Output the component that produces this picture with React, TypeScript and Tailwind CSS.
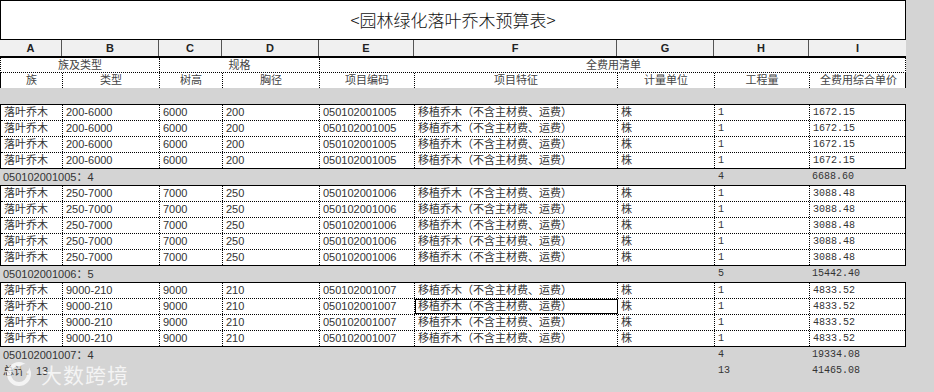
const grid = "grid grid-cols-[62px_97px_63px_97px_95px_203px_97px_95px_97px]";
const sans = "font-['Liberation_Sans','Noto_Sans_CJK_SC',sans-serif]";
const mono = "font-['Liberation_Mono','Noto_Sans_CJK_SC',monospace]";

type Block = {
  type: string;
  height: string;
  dbh: string;
  code: string;
  price: string;
  count: number;
  total: string;
};

const blocks: Block[] = [
  { type: "200-6000", height: "6000", dbh: "200", code: "050102001005", price: "1672.15", count: 4, total: "6688.60" },
  { type: "250-7000", height: "7000", dbh: "250", code: "050102001006", price: "3088.48", count: 5, total: "15442.40" },
  { type: "9000-210", height: "9000", dbh: "210", code: "050102001007", price: "4833.52", count: 4, total: "19334.08" },
];

const letters = ["A", "B", "C", "D", "E", "F", "G", "H", "I"];
const subHeads = ["族", "类型", "树高", "胸径", "项目编码", "项目特征", "计量单位", "工程量", "全费用综合单价"];

const Cell = ({
  children,
  last,
  numeric,
  selected,
}: {
  children: React.ReactNode;
  last?: boolean;
  numeric?: boolean;
  selected?: boolean;
}) => (
  <div
    className={`h-full pl-[3px] leading-[15px] whitespace-nowrap overflow-hidden ${
      last ? "" : "border-r border-dotted border-black"
    } ${numeric ? `${mono} text-[10px]` : "text-[11px]"} ${
      selected ? "outline outline-1 outline-black -outline-offset-1" : ""
    }`}
  >
    {children}
  </div>
);

const DataBlock = ({ block, blockIndex }: { block: Block; blockIndex: number }) => (
  <div className="border-x border-t border-black bg-white">
    {Array.from({ length: block.count }).map((_, i) => {
      const lastRow = i === block.count - 1;
      const values = ["落叶乔木", block.type, block.height, block.dbh, block.code, "移植乔木（不含主材费、运费）", "株", "1", block.price];
      return (
        <div
          key={i}
          className={`${grid} h-[16px] text-[#333] ${
            lastRow ? "border-b border-black" : "border-b border-dotted border-black"
          }`}
        >
          {values.map((v, c) => (
            <Cell key={c} last={c === 8} numeric={c >= 7} selected={blockIndex === 2 && i === 1 && c === 5}>
              {v}
            </Cell>
          ))}
        </div>
      );
    })}
  </div>
);

const SummaryRow = ({ label, qty, amount }: { label: string; qty: string; amount: string }) => (
  <div className={`${grid} h-[16px] text-[#333]`}>
    <div className="col-span-7 pl-[3px] text-[11px] leading-[16px] whitespace-nowrap">{label}</div>
    <div className={`pl-[4px] ${mono} text-[10px] leading-[16px]`}>{qty}</div>
    <div className={`pl-[3px] ${mono} text-[10px] leading-[16px]`}>{amount}</div>
  </div>
);

export default function App() {
  return (
    <div className={`relative w-[934px] h-[392px] overflow-hidden bg-[#d4d4d4] ${sans}`}>
      <div className="w-[906px]">
        <div className="h-[40px] border border-black bg-white flex items-center justify-center text-[17px] font-light text-[#111] font-['Noto_Sans_CJK_SC',sans-serif]">
          &lt;园林绿化落叶乔木预算表&gt;
        </div>

        <div className={`${grid} h-[18px] bg-[#f0f0f0] border-b-2 border-black`}>
          {letters.map((l, i) => (
            <div
              key={l}
              className={`text-center text-[11px] font-bold leading-[16px] text-[#222] ${
                i < 8 ? "border-r border-[#555]" : ""
              }`}
            >
              {l}
            </div>
          ))}
        </div>

        <div className={`${grid} h-[15px] bg-white border-x border-black border-b border-b-black border-dotted text-[11px] leading-[14px] text-[#444]`}>
          <div className="col-span-2 text-center border-r border-dotted border-black">族及类型</div>
          <div className="col-span-2 text-center border-r border-dotted border-black">规格</div>
          <div className="col-span-5 text-center">全费用清单</div>
        </div>

        <div className={`${grid} h-[15px] bg-white border-x border-black text-[11px] leading-[15px] text-[#444]`}>
          {subHeads.map((h, i) => (
            <div key={h} className={`text-center ${i < 8 ? "border-r border-dotted border-black" : ""}`}>
              {h}
            </div>
          ))}
        </div>

        <div className="h-[16px]" />

        {blocks.map((b, i) => (
          <div key={b.code}>
            <DataBlock block={b} blockIndex={i} />
            <SummaryRow label={`${b.code}：${b.count}`} qty={String(b.count)} amount={b.total} />
          </div>
        ))}
        <SummaryRow label="总计：13" qty="13" amount="41465.08" />
      </div>

      <div className="absolute left-[5px] top-[361px] flex items-center gap-[8px] text-white/75 pointer-events-none">
        <svg width="28" height="26" viewBox="0 0 28 26" fill="none">
          <circle cx="14" cy="13" r="10" stroke="rgba(255,255,255,0.75)" strokeWidth="4" />
          <circle cx="20" cy="7" r="4" fill="#d4d4d4" />
        </svg>
        <span className="text-[21px] leading-[26px] font-['Noto_Sans_CJK_SC',sans-serif] tracking-[1px]">大数跨境</span>
      </div>
    </div>
  );
}
